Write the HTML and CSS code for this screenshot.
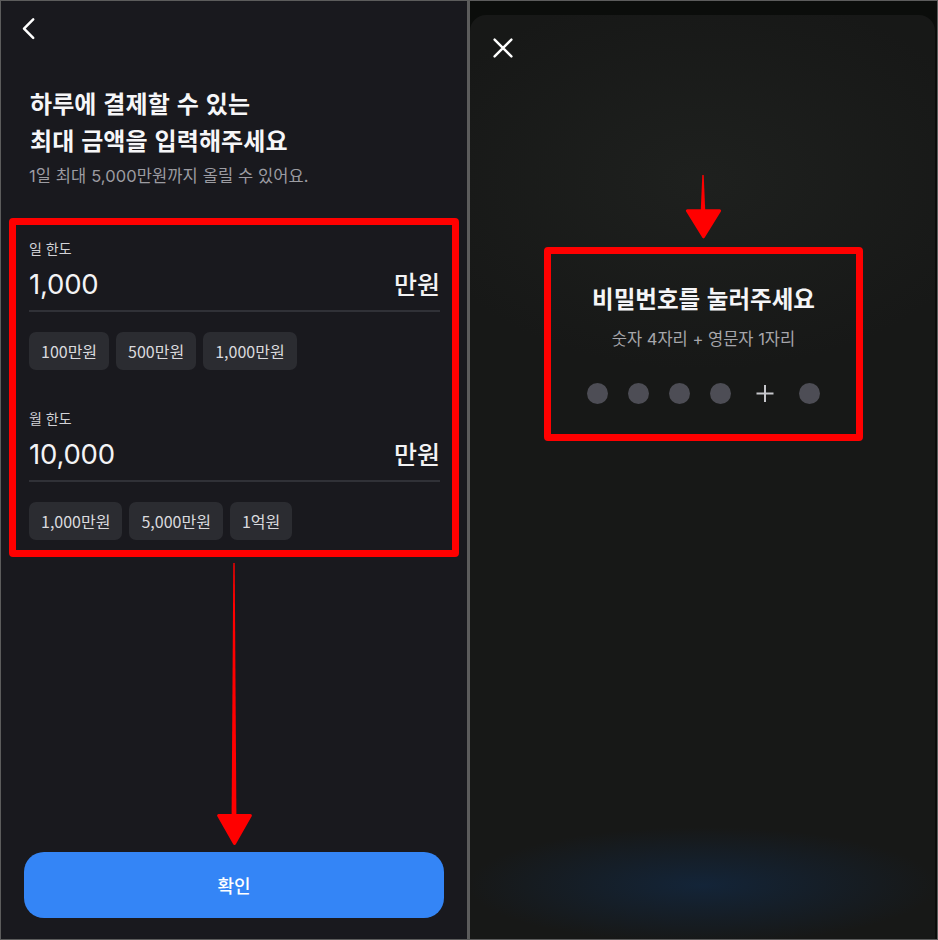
FILE: index.html
```html
<!DOCTYPE html>
<html lang="ko">
<head>
<meta charset="utf-8">
<title>한도 설정</title>
<link rel="stylesheet" href="styles.css">
</head>
<body>
<div class="frame">
  <section class="panel left">
    <header class="nav">
      <svg class="chev" width="16" height="24" viewBox="0 0 16 24"><polyline points="13.2,3.4 4,12.6 13.2,21.8" fill="none" stroke="#ffffff" stroke-width="2.5" stroke-linecap="round" stroke-linejoin="round"/></svg>
    </header>
    <h1 class="title">하루에 결제할 수 있는<br>최대 금액을 입력해주세요</h1>
    <p class="sub">1일 최대 5,000만원까지 올릴 수 있어요.</p>
    <div class="hl limits">
      <div class="field">
        <div class="label">일 한도</div>
        <div class="amount"><span class="num">1,000</span><span class="unit">만원</span></div>
        <div class="rule"></div>
        <div class="chips">
          <span class="chip">100만원</span>
          <span class="chip">500만원</span>
          <span class="chip">1,000만원</span>
        </div>
      </div>
      <div class="field">
        <div class="label">월 한도</div>
        <div class="amount"><span class="num">10,000</span><span class="unit">만원</span></div>
        <div class="rule"></div>
        <div class="chips">
          <span class="chip">1,000만원</span>
          <span class="chip">5,000만원</span>
          <span class="chip">1억원</span>
        </div>
      </div>
    </div>
    <div class="spacer"></div>
    <button class="cta">확인</button>
  </section>
  <section class="panel right">
    <div class="sheet">
      <svg class="close" width="24" height="24" viewBox="0 0 24 24"><path d="M2.6 2.6 L19.4 19.4 M19.4 2.6 L2.6 19.4" fill="none" stroke="#ffffff" stroke-width="2.4" stroke-linecap="round"/></svg>
      <div class="hl pin">
        <h2 class="pin-title">비밀번호를 눌러주세요</h2>
        <p class="pin-sub">숫자 4자리 + 영문자 1자리</p>
        <div class="dots">
          <span class="dot"></span>
          <span class="dot"></span>
          <span class="dot"></span>
          <span class="dot"></span>
          <svg class="plus" width="28" height="21" viewBox="0 0 28 21"><path d="M14 2 V19 M5.5 10.5 H22.5" fill="none" stroke="#c6c6cb" stroke-width="2"/></svg>
          <span class="dot"></span>
        </div>
      </div>
    </div>
  </section>
  <svg class="annot" width="938" height="940" viewBox="0 0 938 940">
    <polygon points="233.3,563 234.7,563 236.4,816 231.6,816" fill="#ff0000"/>
    <polygon points="218.6,815.6 250.4,815.6 234.5,843.4" fill="#ff0000" stroke="#ff0000" stroke-width="3" stroke-linejoin="round"/>
    <polygon points="702.3,175 703.7,175 705.3,212 700.7,212" fill="#ff0000"/>
    <polygon points="687.4,210.8 719.6,210.8 703.5,236.8" fill="#ff0000" stroke="#ff0000" stroke-width="3" stroke-linejoin="round"/>
  </svg>
</div>
</body>
</html>
```

FILE: styles.css
```css
html, body {
  margin: 0;
  padding: 0;
  background: #5c5c5c;
}

body {
  font-family: "Noto Sans CJK KR", "Noto Sans", sans-serif;
}

.frame {
  position: relative;
  width: 938px;
  height: 940px;
  box-sizing: border-box;
  padding: 1px;
  background: #5c5c5c;
  display: flex;
  gap: 3px;
}

.panel {
  height: 938px;
  box-sizing: border-box;
}

.left {
  width: 466px;
  background: #19191e;
  display: flex;
  flex-direction: column;
  color: #f4f4f6;
}

.nav {
  height: 83px;
  flex: none;
}

.chev {
  display: block;
  margin: 15px 0 0 19px;
}

.title {
  margin: 0 0 0 29px;
  font-size: 24px;
  line-height: 37px;
  font-weight: 700;
  color: #f6f6f8;
  letter-spacing: 0.1px;
}

.sub {
  margin: 7px 0 0 28px;
  height: 22px;
  font-family: Inter, "Noto Sans CJK KR", sans-serif;
  font-size: 16.5px;
  line-height: 22px;
  color: #9c9ca2;
  letter-spacing: 0.1px;
}

.hl {
  border: 7px solid #ff0000;
  border-radius: 4px;
  box-sizing: border-box;
}

.limits {
  margin: 31px 8px 0 8px;
  padding: 13px 12px 10px 13px;
}

.field + .field {
  margin-top: 38px;
}

.label {
  height: 20px;
  font-size: 14px;
  line-height: 20px;
  color: #d2d2d7;
}

.amount {
  display: flex;
  justify-content: space-between;
  align-items: baseline;
  height: 36px;
  margin-top: 7px;
  line-height: 36px;
  color: #f3f3f5;
}

.num {
  font-family: Inter, "Noto Sans CJK KR", sans-serif;
  font-size: 27.5px;
  font-weight: 400;
  letter-spacing: -0.2px;
}

.unit {
  font-size: 25px;
  font-weight: 500;
}

.rule {
  height: 2px;
  margin-top: 9px;
  background: #303137;
}

.chips {
  display: flex;
  gap: 7px;
  margin-top: 20px;
}

.chip {
  height: 38px;
  padding: 0 12px;
  border-radius: 7px;
  background: #2b2c31;
  color: #dadade;
  font-size: 16px;
  line-height: 38px;
}

.spacer {
  flex: 1;
}

.cta {
  flex: none;
  margin: 0 23px 21px 23px;
  height: 66px;
  border: 0;
  border-radius: 20px;
  background: #3485f6;
  color: #ffffff;
  font-family: "Noto Sans CJK KR", sans-serif;
  font-size: 18px;
  font-weight: 500;
}

.right {
  flex: 1;
  background: #0b0d0b;
  display: flex;
  flex-direction: column;
  padding: 14px 2px 0 0;
}

.sheet {
  flex: 1;
  border-radius: 16px 16px 0 0;
  background:
    radial-gradient(ellipse 300px 190px at 50% 165px, rgba(36, 39, 36, 0.55), rgba(36, 39, 36, 0) 100%),
    radial-gradient(ellipse 235px 58px at 50% 870px, rgba(19, 37, 58, 0.95), rgba(19, 37, 58, 0) 100%),
    #171817;
  display: flex;
  flex-direction: column;
  align-items: center;
}

.close {
  display: block;
  align-self: flex-start;
  margin: 22px 0 0 22px;
}

.pin {
  width: 319px;
  margin: 186px 0 0 2px;
  padding: 29px 0 30px 0;
  text-align: center;
}

.pin-title {
  margin: 0;
  font-size: 23.5px;
  line-height: 30px;
  font-weight: 700;
  color: #f5f5f7;
}

.pin-sub {
  margin: 15px 0 0 0;
  height: 22px;
  font-family: Inter, "Noto Sans CJK KR", sans-serif;
  font-size: 16.5px;
  line-height: 22px;
  color: #a6a6ab;
}

.dots {
  display: flex;
  justify-content: center;
  align-items: center;
  gap: 20px;
  margin-top: 33px;
  height: 21px;
}

.dot {
  width: 21px;
  height: 21px;
  border-radius: 50%;
  background: #4d4d55;
}

.plus {
  display: block;
}

.annot {
  position: absolute;
  left: 0;
  top: 0;
  pointer-events: none;
}
```
